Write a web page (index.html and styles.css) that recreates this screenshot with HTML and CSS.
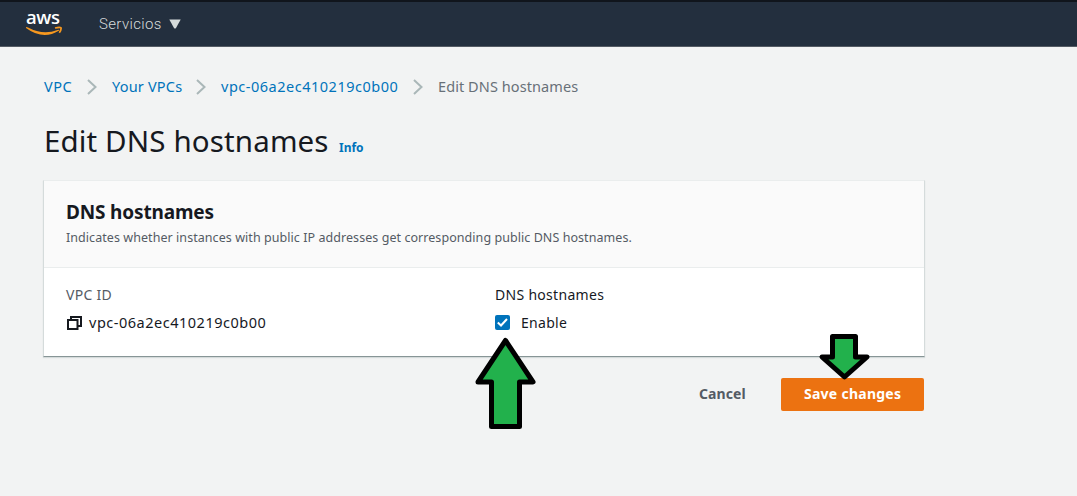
FILE: index.html
```html
<!DOCTYPE html>
<html lang="es">
<head>
<meta charset="utf-8">
<title>Edit DNS hostnames</title>
<link rel="stylesheet" href="styles.css">
</head>
<body>
<header class="topbar">
  <div class="logo">
    <span class="logo-text">aws</span>
    <svg class="logo-smile" width="37" height="11" viewBox="0 0 37 11"><path d="M0 1.300Q.5.600 2 1.500Q17 9.500 31.500 4Q33.800 3.300 32.800 4.800Q17 14.500 0 2z" fill="#f7981f"/><path d="M29 2Q34 .8 35 1.800Q35.600 3.500 33.300 6.800" fill="none" stroke="#f7981f" stroke-width="1.700"/></svg>
  </div>
  <div class="services"><span class="services-label">Servicios</span><svg width="12" height="10" viewBox="0 0 12 10"><path d="M.3.500h11.400L7 9Q6 10 5 9z" fill="#d5dbdb"/></svg></div>
</header>
<main class="page">
  <nav class="crumbs">
    <a class="crumb crumb-vpc">VPC</a>
    <svg class="chevron" width="11" height="18" viewBox="0 0 11 18"><path d="M1 2l7.500 7-7.500 7" fill="none" stroke="#aab7b8" stroke-width="2"/></svg>
    <a class="crumb crumb-list">Your VPCs</a>
    <svg class="chevron" width="11" height="18" viewBox="0 0 11 18"><path d="M1 2l7.500 7-7.500 7" fill="none" stroke="#aab7b8" stroke-width="2"/></svg>
    <a class="crumb crumb-id">vpc-06a2ec410219c0b00</a>
    <svg class="chevron" width="11" height="18" viewBox="0 0 11 18"><path d="M1 2l7.500 7-7.500 7" fill="none" stroke="#aab7b8" stroke-width="2"/></svg>
    <span class="crumb crumb-current">Edit DNS hostnames</span>
  </nav>
  <div class="heading"><h1 class="title">Edit DNS hostnames</h1><a class="info">Info</a></div>
  <section class="card">
    <div class="card-head">
      <h2 class="card-title">DNS hostnames</h2>
      <p class="card-desc">Indicates whether instances with public IP addresses get corresponding public DNS hostnames.</p>
    </div>
    <div class="card-body">
      <div class="field">
        <div class="label"><span class="label-vpc">VPC ID</span></div>
        <div class="value"><svg class="copy" width="16" height="16" viewBox="0 0 16 16"><path d="M5 5V2H15v9H11" fill="none" stroke="#16191f" stroke-width="2"/><path d="M2 5h9.500v9H2z" fill="#fff" stroke="#16191f" stroke-width="2"/></svg><span class="vpc-id">vpc-06a2ec410219c0b00</span></div>
      </div>
      <div class="field">
        <div class="label label-dark"><span class="label-dns">DNS hostnames</span></div>
        <div class="value"><span class="check"><svg width="15" height="15" viewBox="0 0 15 15"><path d="M2.800 7.500l3.200 3L12 4" fill="none" stroke="#fff" stroke-width="2"/></svg></span><span class="enable">Enable</span></div>
      </div>
    </div>
  </section>
  <div class="actions"><span class="cancel">Cancel</span><span class="save"><span class="save-label">Save changes</span></span></div>
</main>
<svg class="marks" width="1077" height="496" viewBox="0 0 1077 496">
  <g fill="#22b14c" stroke="#000" stroke-width="5" stroke-linejoin="round">
    <path d="M505.500 340.500L533 382H519.500V426.500H491.500V382H478z"/>
    <path d="M832.500 336.500H855.500V357H867L844.500 377L822 357H832.500z"/>
  </g>
</svg>
</body>
</html>
```
FILE: styles.css
```css
* { box-sizing: border-box; }
body { margin: 0; background: #f2f3f3; color: #16191f; font: 14px/20px "Noto Sans", sans-serif; overflow: hidden; }
h1, h2, p { margin: 0; font-weight: 400; }
svg { display: block; flex: none; }
span, a { white-space: nowrap; }

.topbar { display: flex; height: 47px; padding-left: 26px; background: #232f3e; border-top: 2px solid #10151c; border-bottom: 1px solid #545b64; }
.logo { width: 73px; padding-top: 7px; }
.logo-text { display: block; height: 17px; line-height: 16px; font-family: "Open Sans", sans-serif; font-size: 18.5px; font-weight: 600; letter-spacing: -.4px; color: #fff; }
.services { display: flex; align-items: center; color: #d5dbdb; font-family: Roboto, sans-serif; font-size: 15px; font-weight: 300; }
.services-label { width: 70px; letter-spacing: .35px; }

.page { width: 924px; padding: 30px 0 0 44px; }
.crumbs { display: flex; align-items: center; height: 20px; }
.crumb { height: 20px; line-height: 18px; color: #0073bb; font-size: 14.5px; }
.crumb-vpc { width: 43px; letter-spacing: .5px; }
.crumb-list { width: 84px; margin-left: 14px; letter-spacing: .2px; }
.crumb-id { width: 192px; margin-left: 14px; letter-spacing: .51px; }
.crumb-current { margin-left: 14px; color: #687078; letter-spacing: .08px; }
.heading { display: flex; align-items: baseline; height: 40px; margin-top: 24px; line-height: 40px; }
.title { width: 295px; font-size: 29.5px; letter-spacing: .13px; white-space: nowrap; }
.info { color: #0073bb; font-size: 12px; font-weight: 700; }

.card { height: 177px; margin: 19px -1px 21px; background: #fff; border: 1px solid #eaeded; border-left-color: #d5dbdb; border-right-color: #d5dbdb; border-bottom-color: #879596; box-shadow: 0 1px 1px #d5dbdb; }
.card-head { height: 87px; padding: 19px 22px; background: #fafafa; border-bottom: 1px solid #eaeded; }
.card-title { height: 25px; line-height: 24px; font-size: 19px; font-weight: 700; letter-spacing: -.16px; }
.card-desc { color: #545b64; font-size: 12.5px; line-height: 25px; letter-spacing: .06px; white-space: nowrap; }
.card-body { display: grid; grid-template-columns: 429px 1fr; padding: 17px 22px; }
.label { color: #545b64; }
.label-vpc, .label-dns, .enable { letter-spacing: .3px; }
.label-dark { color: #16191f; }
.value { display: flex; align-items: center; height: 20px; margin-top: 8px; }
.copy { margin-right: 7px; }
.vpc-id { height: 20px; line-height: 18px; font-size: 14.5px; letter-spacing: .51px; }
.check { width: 15px; height: 15px; margin: -1px 11px 0 0; background: #0073bb; border-radius: 2px; }

.actions { display: flex; justify-content: flex-end; align-items: center; height: 33px; font-weight: 700; }
.cancel { width: 82px; margin-top: -1px; color: #545b64; letter-spacing: .1px; }
.save { width: 143px; height: 33px; padding: 6px 23px; color: #fff; background: #ec7211; border-radius: 2px; letter-spacing: .26px; }
.marks { position: absolute; left: 0; top: 0; }
```
